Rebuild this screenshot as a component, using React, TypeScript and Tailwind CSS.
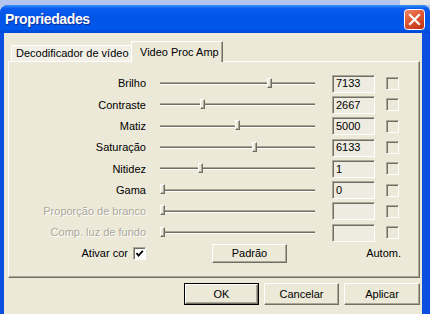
import React from "react";

type Row = { label: string; thumb: number; value: string; disabled?: boolean };

const rows: Row[] = [
  { label: "Brilho", thumb: 107, value: "7133" },
  { label: "Contraste", thumb: 40, value: "2667" },
  { label: "Matiz", thumb: 75, value: "5000" },
  { label: "Saturação", thumb: 92, value: "6133" },
  { label: "Nitidez", thumb: 38, value: "1" },
  { label: "Gama", thumb: 0, value: "0" },
  { label: "Proporção de branco", thumb: 0, value: "", disabled: true },
  { label: "Comp. luz de fundo", thumb: 0, value: "", disabled: true },
];

const raised =
  "bg-[#ece9d8] border border-t-white border-l-white border-r-[#716f64] border-b-[#716f64] shadow-[inset_-1px_-1px_#aca899]";
const sunken =
  "border border-t-[#aca899] border-l-[#aca899] border-r-white border-b-white shadow-[inset_1px_1px_#716f64]";
const disabledText = "text-[#aca899] [text-shadow:1px_1px_#ffffff]";

function Slider({ thumb }: { thumb: number }) {
  return (
    <div className="relative ml-[14px] w-[155px] h-[14px] flex items-center">
      <div className="w-full h-[3px] bg-[linear-gradient(#aca899_0_1px,#716f64_1px_2px,#ffffff_2px_3px)]" />
      <div className={`absolute top-[1px] h-[10px] w-[5px] ${raised}`} style={{ left: thumb }} />
    </div>
  );
}

function Button({ label, className = "" }: { label: string; className?: string }) {
  return (
    <div className={`flex items-center justify-center ${raised} ${className}`}>
      {label}
    </div>
  );
}

export default function App() {
  return (
    <div className="w-[430px] h-[314px] overflow-hidden bg-[#b9c8ea] font-['Liberation_Sans',Arial,sans-serif] text-[11px] text-black">
      <div className="flex h-[5px]">
        <div className="w-[400px] bg-[#b3c5ee]" />
        <div className="flex-1 bg-[#e6e6e2]" />
      </div>
      <div className="h-[309px] rounded-t-[8px] overflow-hidden bg-[#0a4fe0] flex flex-col">
        {/* title bar */}
        <div className="h-[28px] shrink-0 flex items-center justify-between pl-[5px] pr-[5px] bg-[linear-gradient(#3c95ff_0%,#0a5cf0_12%,#0054e6_45%,#0058ec_85%,#0046d4_100%)]">
          <span className="text-white font-bold text-[14px] tracking-[-0.4px] [text-shadow:1px_1px_#0f2d94]">
            Propriedades
          </span>
          <svg width="21" height="21" viewBox="0 0 21 21">
            <defs>
              <linearGradient id="cg" x1="0" y1="0" x2="0.6" y2="1">
                <stop offset="0" stopColor="#f08a6a" />
                <stop offset="0.5" stopColor="#e05a35" />
                <stop offset="1" stopColor="#c5391a" />
              </linearGradient>
            </defs>
            <rect x="0.5" y="0.5" width="20" height="20" rx="3" fill="url(#cg)" stroke="#ffffff" />
            <path d="M6 6 L15 15 M15 6 L6 15" stroke="#ffffff" strokeWidth="2.2" strokeLinecap="square" />
          </svg>
        </div>

        {/* client */}
        <div className="flex-1 ml-[4px] mr-[8px] bg-[#ece9d8] pl-[4px] pr-[2px] pt-[8px]">
          {/* tabs */}
          <div className="flex items-end h-[20px] relative z-10">
            <div className="ml-[3px] w-[122px] h-[16px] flex items-center pl-[4px] border-t border-l border-white bg-[#f1efe6]">
              Decodificador de vídeo
            </div>
            <div className="-ml-[2px] -mb-px w-[92px] h-[21px] flex items-center pl-[8px] bg-[#ece9d8] border-t border-l border-r border-t-white border-l-white border-r-[#716f64] shadow-[inset_-1px_0_#aca899]">
              Video Proc Amp
            </div>
          </div>

          {/* panel */}
          <div className="h-[217px] border border-t-white border-l-white border-r-[#716f64] border-b-[#716f64] shadow-[inset_-1px_-1px_#aca899] pt-[11px]">
            {rows.map((r) => (
              <div key={r.label} className="flex items-center h-[21.3px]">
                <div className={`w-[137px] text-right ${r.disabled ? disabledText : ""}`}>{r.label}</div>
                <Slider thumb={r.thumb} />
                <div className={`ml-[17px] w-[43px] h-[18px] flex items-center pl-[3px] bg-[#eeebe0] ${sunken}`}>
                  {r.value}
                </div>
                <div className={`ml-[11px] w-[13px] h-[13px] bg-[#ece9d8] ${sunken}`} />
              </div>
            ))}
            <div className="flex items-center h-[20px]">
              <div className="w-[137px] flex items-center justify-end gap-[5px]">
                <span>Ativar cor</span>
                <div className={`w-[13px] h-[13px] bg-white flex items-center justify-center ${sunken}`}>
                  <svg width="9" height="9" viewBox="0 0 9 9">
                    <path d="M1.5 4 L3.5 6.5 L7.8 1.8" stroke="#000" strokeWidth="1.8" fill="none" />
                  </svg>
                </div>
              </div>
              <Button label="Padrão" className="ml-[66px] w-[75px] h-[19px]" />
              <div className="flex-1 text-right pr-[18px]">Autom.</div>
            </div>
          </div>

          {/* bottom buttons */}
          <div className="flex justify-end gap-[5px] mt-[5px]">
            <div className="w-[75px] h-[22px] border border-black flex">
              <Button label="OK" className="flex-1" />
            </div>
            <Button label="Cancelar" className="w-[75px] h-[22px]" />
            <Button label="Aplicar" className="w-[76px] h-[22px]" />
          </div>
        </div>
      </div>
    </div>
  );
}
